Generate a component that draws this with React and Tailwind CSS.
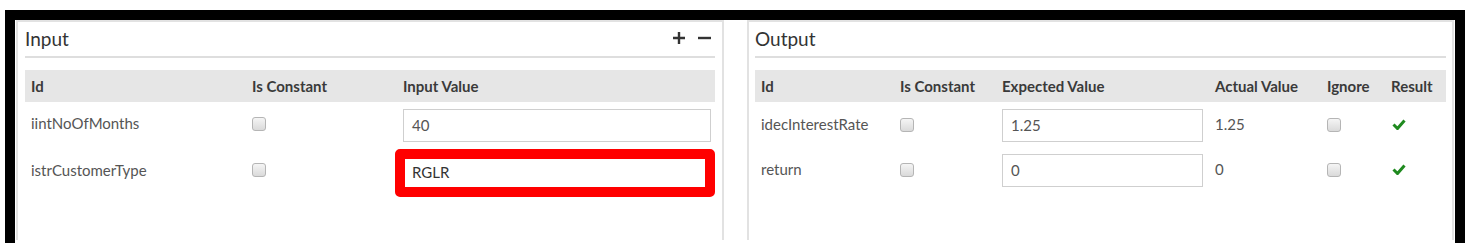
import React from "react";

const font = { fontFamily: "Lato, 'Open Sans', sans-serif" };

function Checkbox() {
  return (
    <div className="w-[14px] h-[14px] rounded-[3px] border border-[#b5b5b5] bg-gradient-to-b from-[#f5f5f5] to-[#dadada]" />
  );
}

function PlusIcon() {
  return (
    <svg width="14" height="14" viewBox="0 0 14 14">
      <path d="M7 1v12M1 7h12" stroke="#333" strokeWidth="2.4" />
    </svg>
  );
}

function MinusIcon() {
  return (
    <svg width="14" height="14" viewBox="0 0 14 14">
      <path d="M1 7h13" stroke="#333" strokeWidth="2.4" />
    </svg>
  );
}

function CheckIcon() {
  return (
    <svg width="14" height="11" viewBox="0 0 14 11">
      <path d="M1.5 5.5l4 4L12.5 1.5" fill="none" stroke="#1f8a1f" strokeWidth="3" strokeLinejoin="miter" />
    </svg>
  );
}

function TextBox({ value }) {
  return (
    <div className="h-[33px] w-full border border-[#cfcfcf] bg-white flex items-center px-[8px] text-[15px] text-[#555]">
      {value}
    </div>
  );
}

function InputPanel() {
  const cols = "grid grid-cols-[221px_151px_320px]";
  return (
    <div className="w-[708px] h-[220px] border-2 border-b-0 border-[#e2e2e2] px-[7px]">
      <div className="h-[36px] border-b-2 border-[#dedede] flex items-center justify-between pr-[4px]">
        <span className="text-[19px] text-[#333]">Input</span>
        <div className="flex items-center gap-[11px] mb-[2px]">
          <PlusIcon />
          <MinusIcon />
        </div>
      </div>
      <div className={`${cols} mt-[12px] h-[32px] items-center bg-[#e6e6e6] text-[15px] font-bold text-[#3a3a3a]`}>
        <div className="px-[6px]">Id</div>
        <div className="px-[6px]">Is Constant</div>
        <div className="px-[6px]">Input Value</div>
      </div>
      <div className={`${cols} h-[47px] items-center text-[15px] text-[#555]`}>
        <div className="px-[6px] mb-[4px]">iintNoOfMonths</div>
        <div className="px-[6px] mb-[3px]"><Checkbox /></div>
        <div className="px-[6px]"><TextBox value="40" /></div>
      </div>
      <div className={`${cols} h-[43px] items-center text-[15px] text-[#555]`}>
        <div className="px-[6px]">istrCustomerType</div>
        <div className="px-[6px] mb-[2px]"><Checkbox /></div>
        <div className="px-[6px]">
          <div className="relative">
            <TextBox value="RGLR" />
            <div className="absolute left-[-8px] right-[-4px] top-[-5px] bottom-[-10px] border-[10px] border-[#ff0000] rounded-[5px] bg-white flex items-center pl-[7px] pb-[1px] text-[15px] text-[#333]">
              RGLR
            </div>
          </div>
        </div>
      </div>
    </div>
  );
}

function OutputPanel() {
  const cols = "grid grid-cols-[139px_102px_213px_112px_64px_62px]";
  const rows = [
    { id: "idecInterestRate", expected: "1.25", actual: "1.25", h: "h-[47px]" },
    { id: "return", expected: "0", actual: "0", h: "h-[43px]" },
  ];
  return (
    <div className="w-[707px] h-[220px] border-2 border-b-0 border-[#e2e2e2] px-[6px]">
      <div className="h-[36px] border-b-2 border-[#dedede] flex items-center">
        <span className="text-[19px] text-[#333]">Output</span>
      </div>
      <div className={`${cols} mt-[12px] h-[32px] items-center bg-[#e6e6e6] text-[15px] font-bold text-[#3a3a3a]`}>
        <div className="px-[6px]">Id</div>
        <div className="px-[6px]">Is Constant</div>
        <div className="px-[6px]">Expected Value</div>
        <div className="px-[6px]">Actual Value</div>
        <div className="px-[6px]">Ignore</div>
        <div className="px-[6px]">Result</div>
      </div>
      {rows.map((r) => (
        <div key={r.id} className={`${cols} ${r.h} items-center text-[15px] text-[#555]`}>
          <div className="px-[6px] mb-[2px]">{r.id}</div>
          <div className="px-[6px] mb-[2px]"><Checkbox /></div>
          <div className="px-[6px]"><TextBox value={r.expected} /></div>
          <div className="px-[6px] mb-[2px]">{r.actual}</div>
          <div className="px-[6px] mb-[2px]"><Checkbox /></div>
          <div className="px-[7px] mb-[3px]"><CheckIcon /></div>
        </div>
      ))}
    </div>
  );
}

export default function App() {
  return (
    <div className="w-[1474px] h-[243px] bg-white overflow-hidden pt-[10px] pl-[5px]" style={font}>
      <div className="w-[1460px] h-[237px] bg-black p-[10px]">
        <div className="h-[230px] bg-white flex gap-[23px] pl-[1px] overflow-hidden">
          <InputPanel />
          <OutputPanel />
        </div>
      </div>
    </div>
  );
}
